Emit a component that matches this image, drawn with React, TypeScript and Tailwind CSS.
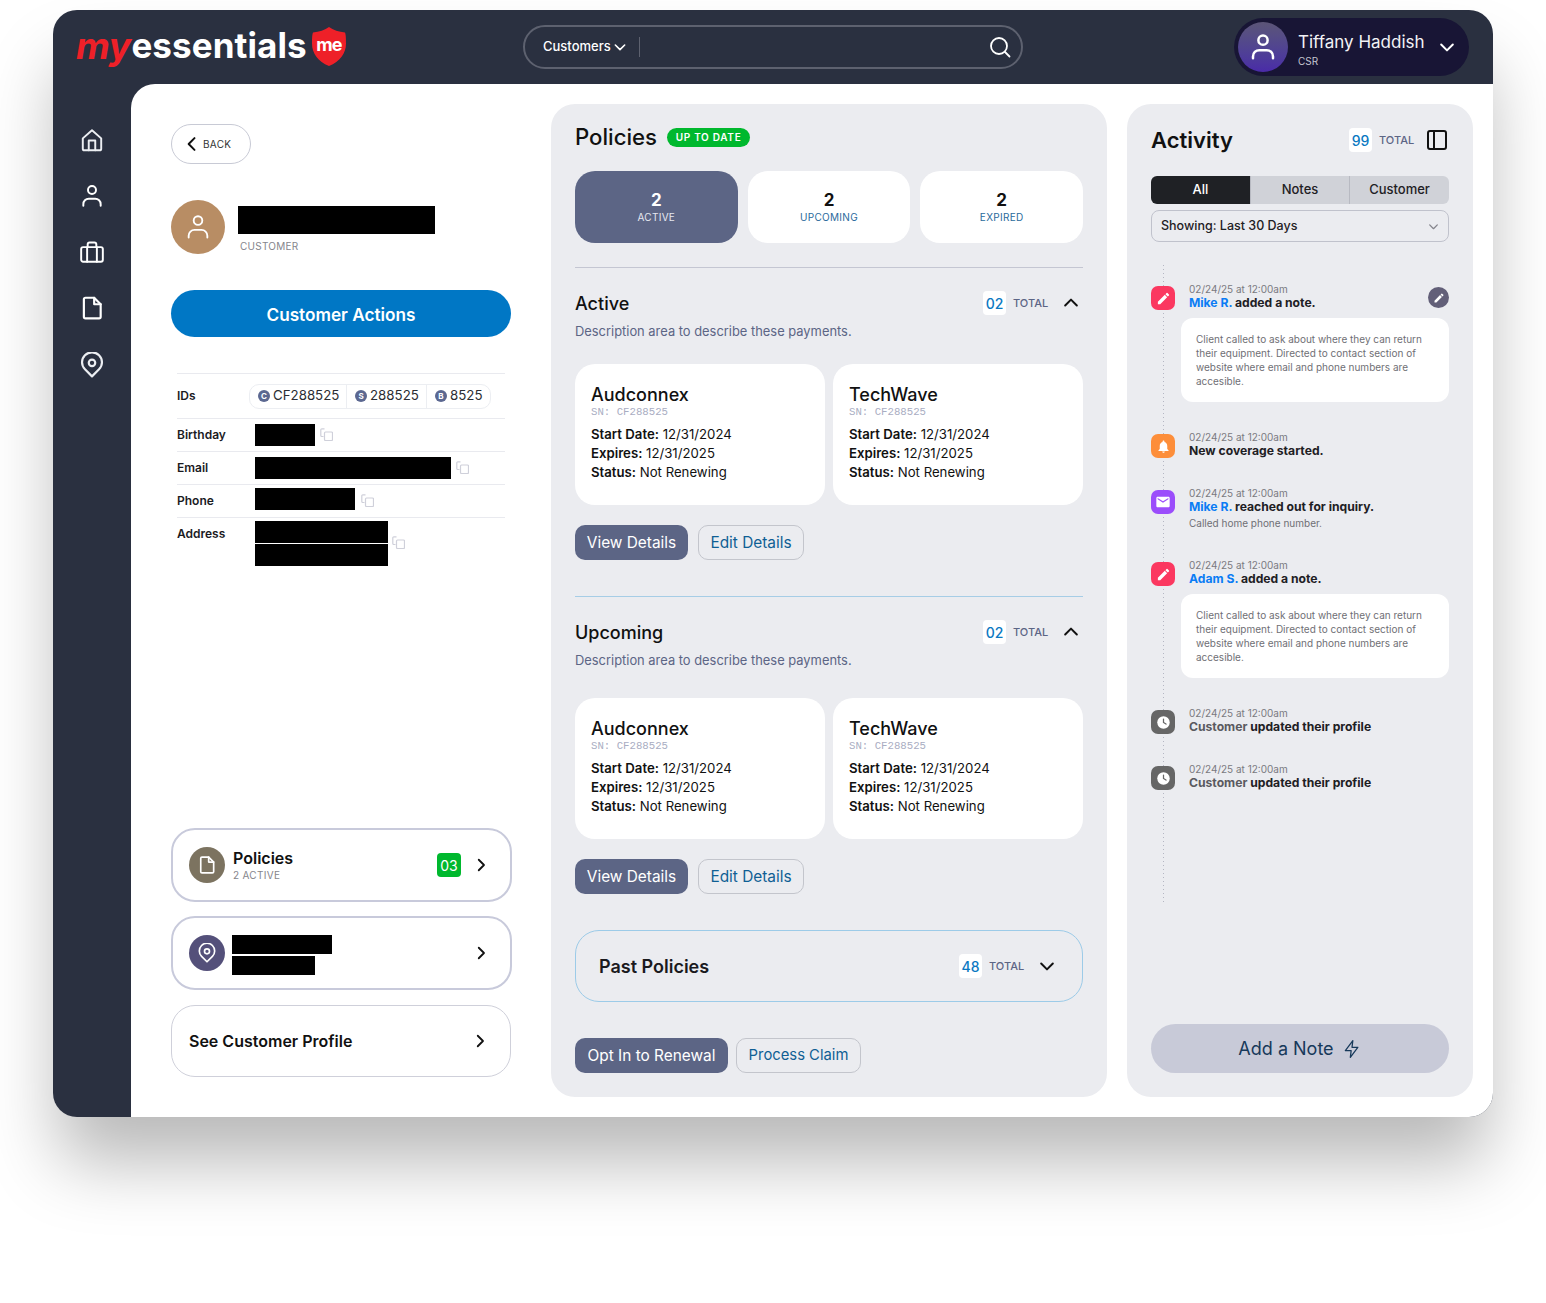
import React from "react";

const S = (p: { className?: string; children: React.ReactNode; fill?: boolean; w?: number; vb?: string }) => (
  <svg viewBox={p.vb ?? "0 0 24 24"} className={p.className} fill={p.fill ? "currentColor" : "none"} stroke={p.fill ? "none" : "currentColor"} strokeWidth={p.w ?? 2} strokeLinecap="round" strokeLinejoin="round">
    {p.children}
  </svg>
);

const Person = ({ className, w }: { className?: string; w?: number }) => (
  <S className={className} w={w}>
    <circle cx="12" cy="6.5" r="3.7" />
    <path d="M4 21v-1.5a5 5 0 0 1 5-5h6a5 5 0 0 1 5 5V21" />
  </S>
);
const FileIc = ({ className }: { className?: string }) => (
  <S className={className}>
    <path d="M6 2.500h8l6 6V20a1.500 1.500 0 0 1-1.500 1.500h-12.500A1.500 1.500 0 0 1 4.500 20V4A1.500 1.500 0 0 1 6 2.500z" />
    <path d="M14 2.500V8.500h6" />
  </S>
);
const Pin = ({ className }: { className?: string }) => (
  <S className={className}>
    <path d="M12 22.500l-6.500-6.500A9.200 9.200 0 1 1 18.500 16z" />
    <circle cx="12" cy="10" r="3" />
  </S>
);
const Chev = ({ d, className }: { d: "l" | "r" | "u" | "d"; className?: string }) => (
  <S className={className} w={2.4}>
    <path d={d === "l" ? "M15 5l-7 7 7 7" : d === "r" ? "M9 5l7 7-7 7" : d === "u" ? "M5 15l7-7 7 7" : "M5 9l7 7 7-7"} />
  </S>
);
const Copy = ({ className }: { className?: string }) => (
  <svg viewBox="0 0 13 13" fill="none" stroke="#cfd0da" strokeWidth="1.200" className={`w-[13px] h-[13px] shrink-0 ${className ?? ""}`}>
    <path d="M3.500 8.500H1.800a1 1 0 0 1-1-1V1.800a1 1 0 0 1 1-1h2.700" />
    <rect x="4.500" y="4" width="8" height="8.500" rx="1" />
  </svg>
);
const Pencil = ({ className }: { className?: string }) => (
  <S fill className={className}>
    <path d="M3 17.250V21h3.750L17.810 9.940l-3.750-3.750L3 17.250zM20.710 7.040a1 1 0 0 0 0-1.410l-2.340-2.340a1 1 0 0 0-1.410 0l-1.830 1.830 3.750 3.750 1.830-1.830z" />
  </S>
);
const Bell = ({ className }: { className?: string }) => (
  <S fill className={className}>
    <path d="M12 22c1.100 0 2-.9 2-2h-4c0 1.100.9 2 2 2zm6-6v-5c0-3.070-1.630-5.640-4.500-6.320V4c0-.83-.67-1.500-1.500-1.500s-1.500.67-1.500 1.500v.68C7.640 5.360 6 7.920 6 11v5l-2 2v1h16v-1l-2-2z" />
  </S>
);
const Mail = ({ className }: { className?: string }) => (
  <S fill className={className}>
    <path d="M20 4H4c-1.100 0-2 .9-2 2v12c0 1.100.9 2 2 2h16c1.100 0 2-.9 2-2V6c0-1.100-.9-2-2-2zm0 4l-8 5-8-5V6l8 5 8-5v2z" />
  </S>
);
const Clock = ({ className }: { className?: string }) => (
  <svg viewBox="0 0 24 24" className={className}>
    <circle cx="12" cy="12" r="10" fill="#fff" />
    <path d="M12 6.500V12l4 2.500" fill="none" stroke="#666" strokeWidth="2" strokeLinecap="round" />
  </svg>
);

const Count = ({ n }: { n: string }) => (
  <div className="flex items-center gap-[7px]">
    <span className="w-[23px] h-[24px] bg-white rounded-[4px] flex items-center justify-center text-[14px] font-medium text-[#0a78c2]">{n}</span>
    <span className="w-[36px] text-[11px] font-medium text-[#5c6585]">TOTAL</span>
  </div>
);

const PolicyCard = ({ name }: { name: string }) => (
  <div className="bg-white rounded-[20px] h-[141px] px-[16px] pt-[21px] text-[#111]">
    <div className="text-[18px] font-medium leading-[20px]">{name}</div>
    <div className="text-[10.700px] leading-[12px] mt-[1px] text-[#a9adc2]" style={{ fontFamily: '"Liberation Mono", monospace' }}>SN: CF288525</div>
    <div className="mt-[7px] text-[13.200px] leading-[19px]">
      <div><b className="font-semibold">Start Date:</b> 12/31/2024</div>
      <div><b className="font-semibold">Expires:</b> 12/31/2025</div>
      <div><b className="font-semibold">Status:</b> Not Renewing</div>
    </div>
  </div>
);

const Btn = ({ children, primary, className }: { children: React.ReactNode; primary?: boolean; className?: string }) => (
  <div className={`h-[35px] rounded-[10px] flex items-center justify-center text-[15.400px] ${primary ? "bg-[#5c6585] text-white" : "border border-[#c3c5cc] text-[#0f5f94]"} ${className ?? ""}`}>{children}</div>
);

const Section = ({ title, gap }: { title: string; gap: string }) => (
  <div>
    <div className="flex items-center justify-between h-[24px] pr-[2px]">
      <div className="text-[18px] font-medium text-[#111]">{title}</div>
      <div className="flex items-center gap-[12px]">
        <Count n="02" />
        <Chev d="u" className="w-[20px] h-[20px] text-[#111]" />
      </div>
    </div>
    <div className="mt-[5px] text-[12.900px] leading-[24px] text-[#5c6585]">Description area to describe these payments.</div>
    <div className={`${gap} grid grid-cols-2 gap-[8px]`}>
      <PolicyCard name="Audconnex" />
      <PolicyCard name="TechWave" />
    </div>
    <div className="mt-[20px] flex gap-[10px]">
      <Btn primary className="w-[113px]">View Details</Btn>
      <Btn className="w-[106px]">Edit Details</Btn>
    </div>
  </div>
);

const Entry = ({ icon, color, children, note, extra, edit }: { icon: React.ReactNode; color: string; children: React.ReactNode; note?: boolean; extra?: string; edit?: boolean }) => (
  <div className="relative">
    <div className="flex gap-[14px]">
      <div className={`relative w-[24px] h-[24px] rounded-[7px] flex items-center justify-center text-white shrink-0 ${color}`}>{icon}</div>
      <div className="-mt-[4px]">
        <div className="text-[10px] leading-[14px] text-[#7a7a80]">02/24/25 at 12:00am</div>
        <div className="text-[12.150px] leading-[14px] font-bold text-[#1e2024]">{children}</div>
        {extra && <div className="text-[10px] leading-[14px] mt-[2px] text-[#6f6f75]">{extra}</div>}
      </div>
    </div>
    {edit && (
      <div className="absolute right-0 top-[1px] w-[21px] h-[21px] rounded-full bg-[#625f78] flex items-center justify-center text-white">
        <Pencil className="w-[12px] h-[12px]" />
      </div>
    )}
    {note && (
      <div className="mt-[8px] ml-[30px] bg-white rounded-[12px] px-[15px] py-[14px] text-[10px] leading-[14px] text-[#6f6f75]">
        Client called to ask about where they can return their equipment. Directed to contact section of website where email and phone numbers are accesible.
      </div>
    )}
  </div>
);

const Row = ({ label, children }: { label: string; children: React.ReactNode }) => (
  <div className="flex border-t border-[#e9eaef] py-[5px]">
    <div className="w-[78px] shrink-0 text-[12px] leading-[22px] font-semibold text-[#1b1b1f]">{label}</div>
    {children}
  </div>
);

const IdSeg = ({ l, v, cls }: { l: string; v: string; cls: string }) => (
  <div className={`flex items-center gap-[3px] h-full ${cls}`}>
    <span className="w-[12px] h-[12px] rounded-full bg-[#5c6891] text-white text-[8px] font-bold flex items-center justify-center">{l}</span>
    <span className="text-[13.300px] text-[#2b2d33]">{v}</span>
  </div>
);

export default function App() {
  return (
    <div className="w-[1546px] h-[1303px] bg-white pt-[10px] pl-[53px] overflow-hidden" style={{ fontFamily: 'Inter, "Liberation Sans", sans-serif' }}>
      <div className="w-[1440px] h-[1107px] rounded-[24px] bg-[#2a3040] shadow-[0_50px_70px_-5px_rgba(0,0,0,0.28)] flex flex-col overflow-hidden">
        <header className="h-[74px] shrink-0 flex items-center relative">
          <div className="ml-[23px] w-[447px] flex items-center h-full">
            <span className="text-[37px] font-bold italic text-[#ee2028] tracking-[-0.5px] leading-none -mt-[4px]">my</span>
            <span className="text-[35px] font-bold text-white tracking-[0.1px] leading-none -mt-[4px] ml-[1px]">essentials</span>
            <span className="relative ml-[5px] w-[34px] h-[39px] -mt-[2px]">
              <svg viewBox="0 0 34 39" className="absolute inset-0 w-full h-full">
                <path d="M17 0c4 3 10 5 16 5.500 1 2 1 8 1 11 0 10-6 18-17 22.500C6 34.500 0 26.500 0 16.500c0-3 0-9 1-11C7 5 13 3 17 0z" fill="#ee2028" />
              </svg>
              <span className="absolute inset-0 flex items-center justify-center text-white font-bold text-[18px] tracking-[-1px] -mt-[3px]">me</span>
            </span>
          </div>
          <div className="w-[500px] h-[44px] rounded-[22px] border-2 border-[#5d616f] flex items-center pl-[18px] pr-[9px]">
            <span className="text-[13px] font-medium text-white">Customers</span>
            <Chev d="d" className="w-[16px] h-[16px] text-white ml-[1px]" />
            <span className="w-px h-[20px] bg-[#5d616f] ml-[11px]" />
            <S className="w-[24px] h-[24px] text-white ml-auto" w={1.8}>
              <circle cx="11" cy="11" r="8" />
              <path d="M17 17l4.500 4.500" />
            </S>
          </div>
          <div className="ml-auto mr-[24px] w-[235px] h-[58px] rounded-[29px] bg-[#181535] flex items-center pl-[4px]">
            <div className="w-[50px] h-[50px] rounded-full bg-gradient-to-b from-[#5c5577] to-[#4a2aa8] flex items-center justify-center text-white">
              <Person className="w-[30px] h-[30px]" />
            </div>
            <div className="ml-[10px] mt-[4px] w-[139px]">
              <div className="text-[17px] leading-[22px] text-[#f2f2f5]">Tiffany Haddish</div>
              <div className="text-[10px] leading-[12px] mt-[2px] text-[#c5c5d0]">CSR</div>
            </div>
            <Chev d="d" className="w-[20px] h-[20px] text-white ml-0" />
          </div>
        </header>
        <div className="flex flex-1 min-h-0">
          <nav className="w-[78px] shrink-0 flex flex-col items-center pt-[43px] gap-[30px] text-white">
            <S className="w-[26px] h-[26px] text-[#eceef2]" w={1.800}>
              <path d="M3.500 10.500L12 3l8.500 7.500V20a1.500 1.500 0 0 1-1.500 1.500H5A1.500 1.500 0 0 1 3.500 20z" />
              <path d="M9 21.500V12.500h6v9" />
            </S>
            <Person className="w-[26px] h-[26px]" w={1.800} />
            <S className="w-[26px] h-[26px]" w={1.800}>
              <rect x="2" y="7.500" width="20" height="13.500" rx="1.800" />
              <path d="M7.500 7.500V21M16.500 7.500V21M8 7.500V5a1.800 1.800 0 0 1 1.800-1.800h4.400A1.800 1.800 0 0 1 16 5v2.500" />
            </S>
            <FileIc className="w-[26px] h-[26px]" />
            <Pin className="w-[26px] h-[26px] text-[#eceef2] mt-[1px]" />
          </nav>
          <main className="flex-1 bg-white rounded-tl-[24px] flex pl-[40px] pr-[20px] pt-[20px] pb-[20px] min-w-0">
            <section className="w-[340px] shrink-0 flex flex-col pt-[20px]">
              <div className="w-[80px] h-[40px] rounded-[20px] border border-[#c8cad5] flex items-center pl-[10px]">
                <Chev d="l" className="w-[20px] h-[20px] text-[#111]" />
                <span className="text-[10px] tracking-[0.3px] text-[#333] ml-[1px]">BACK</span>
              </div>
              <div className="mt-[36px] flex items-start gap-[13px]">
                <div className="w-[54px] h-[54px] rounded-full bg-[#b88d64] flex items-center justify-center text-white">
                  <Person className="w-[28px] h-[28px]" w={1.600} />
                </div>
                <div className="pt-[6px]">
                  <div className="w-[197px] h-[28px] bg-black" />
                  <div className="mt-[6px] ml-[2px] text-[10px] leading-[12px] tracking-[0.25px] text-[#85858c]">CUSTOMER</div>
                </div>
              </div>
              <div className="mt-[36px] h-[47px] pt-[2px] rounded-full bg-[#0077c5] flex items-center justify-center text-white text-[17.200px] font-semibold">Customer Actions</div>
              <div className="mt-[36px] mx-[6px]">
                <div className="flex items-center h-[45px] border-t border-[#e9eaef]">
                  <div className="w-[72px] text-[12px] font-semibold text-[#1b1b1f]">IDs</div>
                  <div className="h-[25px] w-[242px] rounded-[10px] border border-[#eceef2] flex items-center">
                    <IdSeg l="C" v="CF288525" cls="pl-[8px] w-[97px] border-r border-[#eceef2]" />
                    <IdSeg l="S" v="288525" cls="pl-[8px] w-[80px] border-r border-[#eceef2]" />
                    <IdSeg l="B" v="8525" cls="pl-[8px]" />
                  </div>
                </div>
                <Row label="Birthday">
                  <div className="w-[60px] h-[22px] bg-black" />
                  <Copy className="ml-[5px] mt-[4px]" />
                </Row>
                <Row label="Email">
                  <div className="w-[196px] h-[22px] bg-black" />
                  <Copy className="ml-[5px] mt-[4px]" />
                </Row>
                <Row label="Phone">
                  <div className="w-[100px] h-[22px] bg-black -mt-[2px]" />
                  <Copy className="ml-[6px] mt-[4px]" />
                </Row>
                <Row label="Address">
                  <div className="-mt-[2px]">
                    <div className="w-[133px] h-[22px] bg-black" />
                    <div className="w-[133px] h-[22px] bg-black mt-[1px]" />
                  </div>
                  <Copy className="ml-[4px] mt-[13px]" />
                </Row>
              </div>
              <div className="mt-auto flex flex-col pb-[20px]">
                <div className="w-[341px] h-[74px] rounded-[24px] border-2 border-[#c8cadb] flex items-center pl-[16px] pr-[20px]">
                  <div className="w-[36px] h-[36px] rounded-full bg-[#7c7360] flex items-center justify-center text-white"><FileIc className="w-[20px] h-[20px]" /></div>
                  <div className="ml-[8px] -mt-[2px]">
                    <div className="text-[16px] leading-[20px] font-semibold text-[#111]">Policies</div>
                    <div className="text-[10px] leading-[12px] mt-[1px] tracking-[0.3px] text-[#85858c]">2 ACTIVE</div>
                  </div>
                  <span className="ml-auto w-[24px] h-[24px] rounded-[4px] bg-[#00b82e] text-white text-[14px] flex items-center justify-center">03</span>
                  <Chev d="r" className="w-[18px] h-[18px] text-[#111] ml-[11px]" />
                </div>
                <div className="mt-[14px] w-[341px] h-[74px] rounded-[24px] border-2 border-[#c8cadb] flex items-center pl-[16px] pr-[20px]">
                  <div className="w-[36px] h-[36px] rounded-full bg-[#54507a] flex items-center justify-center text-white"><Pin className="w-[20px] h-[20px]" /></div>
                  <div className="ml-[7px] mt-[4px]">
                    <div className="w-[100px] h-[19px] bg-black" />
                    <div className="w-[83px] h-[19px] bg-black mt-[2px]" />
                  </div>
                  <Chev d="r" className="w-[18px] h-[18px] text-[#111] ml-auto" />
                </div>
                <div className="mt-[15px] w-[340px] h-[72px] rounded-[24px] border border-[#cfd0da] flex items-center pl-[17px] pr-[21px]">
                  <span className="text-[16px] font-semibold text-[#111]">See Customer Profile</span>
                  <Chev d="r" className="w-[18px] h-[18px] text-[#111] ml-auto" />
                </div>
              </div>
            </section>
            <section className="ml-[40px] w-[556px] shrink-0 bg-[#ebecf0] rounded-[24px] px-[24px] pt-[20px] flex flex-col">
              <div className="flex items-center gap-[10px] h-[26px]">
                <h2 className="text-[22.200px] font-medium text-[#111]">Policies</h2>
                <span className="h-[19px] w-[83px] rounded-full bg-[#00b82e] text-white text-[10px] font-semibold tracking-[0.7px] flex items-center justify-center">UP TO DATE</span>
              </div>
              <div className="mt-[21px] flex gap-[10px]">
                <div className="w-[163px] h-[72px] rounded-[20px] bg-[#5c6585] text-white flex flex-col items-center justify-center">
                  <span className="text-[17px] leading-[20px] font-bold">2</span>
                  <span className="text-[10px] leading-[14px] tracking-[0.3px] text-[#e6e8f0]">ACTIVE</span>
                </div>
                <div className="w-[163px] h-[72px] rounded-[20px] bg-white flex flex-col items-center justify-center">
                  <span className="text-[17px] leading-[20px] font-bold text-[#111]">2</span>
                  <span className="text-[10px] leading-[14px] tracking-[0.3px] text-[#2a6a9c]">UPCOMING</span>
                </div>
                <div className="w-[163px] h-[72px] rounded-[20px] bg-white flex flex-col items-center justify-center">
                  <span className="text-[17px] leading-[20px] font-bold text-[#111]">2</span>
                  <span className="text-[10px] leading-[14px] tracking-[0.3px] text-[#2a6a9c]">EXPIRED</span>
                </div>
              </div>
              <div className="mt-[24px] h-px bg-[#c4c6d2]" />
              <div className="mt-[23px]"><Section title="Active" gap="mt-[20px]" /></div>
              <div className="mt-[36px] h-px bg-[#a6cde6]" />
              <div className="mt-[23px]"><Section title="Upcoming" gap="mt-[25px]" /></div>
              <div className="mt-[36px] h-[72px] rounded-[24px] border border-[#9ccbe8] flex items-center justify-between pl-[23px] pr-[25px]">
                <span className="text-[18px] font-semibold text-[#1a1a1e]">Past Policies</span>
                <div className="flex items-center gap-[12px]">
                  <Count n="48" />
                  <Chev d="d" className="w-[20px] h-[20px] text-[#111]" />
                </div>
              </div>
              <div className="mt-[36px] flex gap-[8px]">
                <Btn primary className="w-[153px]">Opt In to Renewal</Btn>
                <Btn className="w-[125px]"><span className="text-[14.800px]">Process Claim</span></Btn>
              </div>
            </section>
            <section className="ml-[20px] w-[346px] shrink-0 bg-[#ebecf0] rounded-[24px] px-[24px] pt-[24px] pb-[24px] flex flex-col">
              <div className="flex items-center h-[24px] pr-[2px]">
                <h2 className="text-[22px] font-semibold text-[#111]">Activity</h2>
                <div className="ml-auto"><Count n="99" /></div>
                <svg viewBox="0 0 20 20" className="w-[20px] h-[20px] ml-[12px] text-[#111]" fill="none" stroke="currentColor" strokeWidth="2">
                  <rect x="1" y="1" width="18" height="18" rx="2" />
                  <path d="M7 1v18" />
                </svg>
              </div>
              <div className="mt-[24px] h-[28px] flex rounded-[6px] overflow-hidden text-[13px] font-medium text-[#1e2024]">
                <div className="w-[99px] bg-[#1f2125] text-white flex items-center justify-center">All</div>
                <div className="w-[99px] bg-[#d0d2d8] border-l border-[#b8bac2] flex items-center justify-center">Notes</div>
                <div className="flex-1 bg-[#d0d2d8] border-l border-[#b8bac2] flex items-center justify-center">Customer</div>
              </div>
              <div className="mt-[6px] h-[32px] rounded-[8px] border border-[#c0c2cc] flex items-center justify-between pl-[9px] pr-[8px] text-[12.500px] font-medium text-[#1e2024]">
                <span>Showing: Last 30 Days</span>
                <Chev d="d" className="w-[13px] h-[13px] text-[#85858c]" />
              </div>
              <div className="relative mt-[44px] flex flex-col gap-[32px]">
                <div className="absolute left-[12px] -top-[21px] h-[638px] w-px bg-[repeating-linear-gradient(to_bottom,#b4b6c2_0px,#b4b6c2_1px,transparent_1px,transparent_4px)]" />
                <Entry edit note color="bg-[#fb3860]" icon={<Pencil className="w-[15px] h-[15px]" />}>
                  <span className="text-[#0a7cf5]">Mike R.</span> added a note.
                </Entry>
                <Entry color="bg-[#fd8e3a]" icon={<Bell className="w-[15px] h-[15px]" />}>New coverage started.</Entry>
                <Entry color="bg-[#9b4dfb]" extra="Called home phone number." icon={<Mail className="w-[16px] h-[16px]" />}>
                  <span className="text-[#0a7cf5]">Mike R.</span> reached out for inquiry.
                </Entry>
                <Entry note color="bg-[#fb3860]" icon={<Pencil className="w-[15px] h-[15px]" />}>
                  <span className="text-[#0a7cf5]">Adam S.</span> added a note.
                </Entry>
                <Entry color="bg-[#666666]" icon={<Clock className="w-[15px] h-[15px]" />}>
                  <span className="text-[#5a5a60]">Customer</span> updated their profile
                </Entry>
                <Entry color="bg-[#666666]" icon={<Clock className="w-[15px] h-[15px]" />}>
                  <span className="text-[#5a5a60]">Customer</span> updated their profile
                </Entry>
              </div>
              <div className="mt-auto h-[49px] rounded-full bg-[#c8cad8] flex items-center justify-center gap-[8px] text-[18px] text-[#17395a]">
                Add a Note
                <S className="w-[20px] h-[20px]" w={1.500}>
                  <path d="M13 2L4 14h7l-1 8 9-12h-7z" />
                </S>
              </div>
            </section>
          </main>
        </div>
      </div>
    </div>
  );
}
